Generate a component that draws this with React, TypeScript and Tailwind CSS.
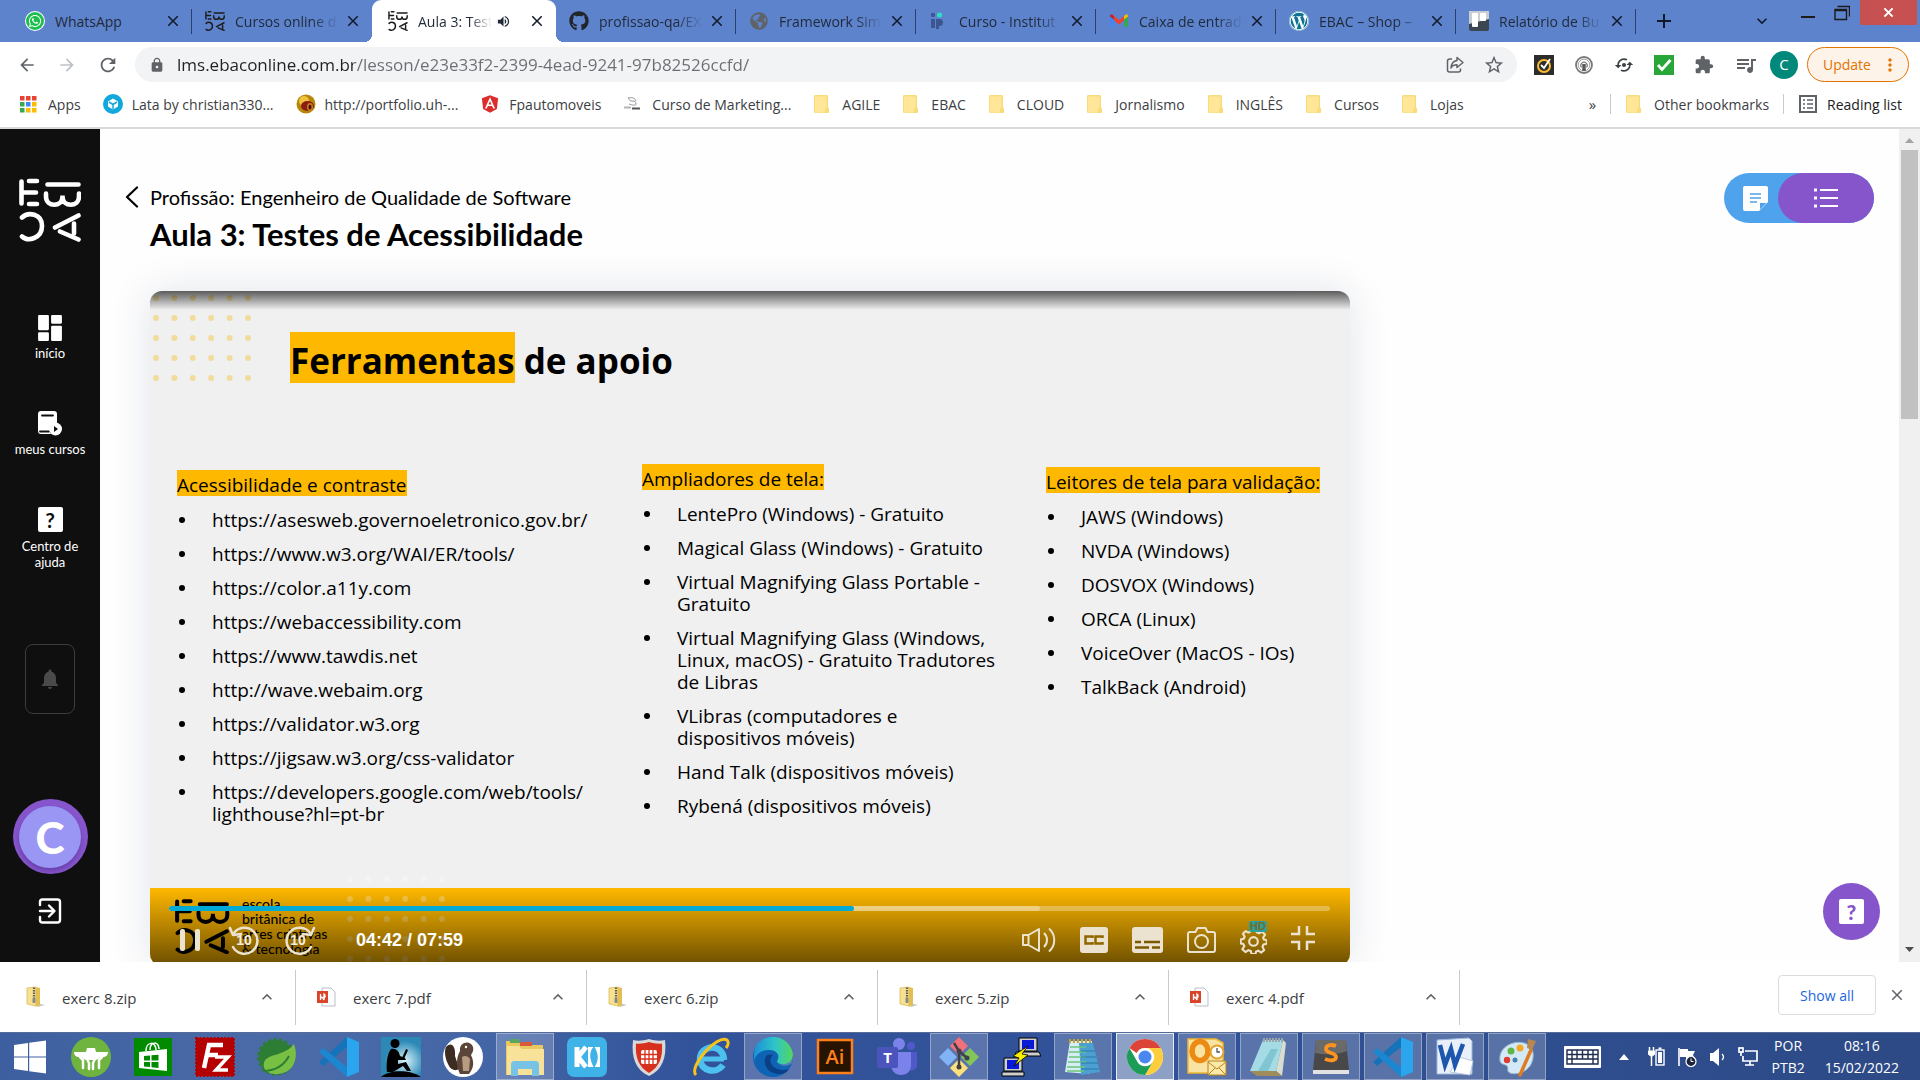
import React from 'react';
import {
  FaWhatsapp, FaGithub, FaWordpress, FaAngular, FaGlobeAmericas,
} from 'react-icons/fa';
import {
  MdArrowBack, MdArrowForward, MdRefresh, MdLock, MdStarBorder, MdVolumeUp, MdQueueMusic, MdExtension,
  MdMoreVert, MdSync, MdClose, MdAdd, MdKeyboardArrowDown, MdKeyboardArrowUp, MdNotifications,
} from 'react-icons/md';

type Kids = { children?: React.ReactNode };

/* ---------- Logos ---------- */

function EbacLogo({ className, color = 'currentColor' }: { className?: string; color?: string }) {
  return (
    <svg viewBox="0 0 62 63" className={className} fill="none" stroke={color} strokeWidth="4.600" strokeLinecap="round">
      <path d="M2.5 3v22M10 2.5h8M3 14h14M10 25.500h8" />
      <path d="M28.500 6h31M27 15v3c0 11 16.500 11 16.500 0v-1v1c0 11 16.500 11 16.500 0v-3" />
      <path d="M3 39c6-6 20-4 20 8.500s-14 16-20 10.500" />
      <path d="M59.500 37L36 49M41 53l18.500 8M55 45v10" />
    </svg>
  );
}

function GmailIcon() {
  return (
    <svg viewBox="0 0 20 20" className="size-5">
      <path d="M1 5v11h4V8z" fill="#4285f4" />
      <path d="M19 5v11h-4V8z" fill="#34a853" />
      <path d="M1 5.500L5 8.500V5L3 3.500C2 3 1 4 1 5.500z" fill="#c5221f" />
      <path d="M19 5.500L15 8.500V5l2-1.500c1-.5 2 .5 2 2z" fill="#fbbc04" />
      <path d="M5 5l5 4 5-4v4.500l-5 4-5-4z" fill="#ea4335" />
    </svg>
  );
}

function InstitutoIcon() {
  return (
    <svg viewBox="0 0 20 20" className="size-5">
      <circle cx="4" cy="4" r="2.200" fill="#3d5590" />
      <path d="M2 8h4v9H2zM7 8h4c4 0 4 7 0 7h-1v3H7z" fill="#3d5590" />
      <circle cx="10.500" cy="4" r="2.500" fill="#2fe0c0" />
    </svg>
  );
}

function TrelloIcon() {
  return (
    <svg viewBox="0 0 20 20" className="size-5">
      <rect width="20" height="20" rx="2" fill="#3c4650" />
      <path d="M0 0h20v8l-20 5z" fill="#c9ced4" />
      <rect x="3" y="2" width="6" height="14" rx="1" fill="#fff" />
      <rect x="11" y="2" width="6" height="8" rx="1" fill="#fff" />
    </svg>
  );
}

/* ---------- Tab strip ---------- */

const tabs: { title: string; icon: React.ReactNode; active?: boolean; line?: boolean; short?: boolean }[] = [
  { title: 'WhatsApp', icon: <span className="flex size-5 items-center justify-center rounded-full bg-white"><span className="flex size-[18px] items-center justify-center rounded-full bg-[#1fbf4f]"><FaWhatsapp className="size-[14px] text-white" /></span></span>, line: true, short: true },
  { title: 'Cursos online d', icon: <EbacLogo className="size-5" color="#1c1c1c" /> },
  { title: 'Aula 3: Teste', icon: <EbacLogo className="size-5" color="#1c1c1c" />, active: true },
  { title: 'profissao-qa/EX', icon: <FaGithub className="size-5 text-[#22262b]" />, line: true },
  { title: 'Framework Sim', icon: <FaGlobeAmericas className="size-[18px] text-[#5f6368]" />, line: true },
  { title: 'Curso - Institut', icon: <InstitutoIcon />, line: true },
  { title: 'Caixa de entrad', icon: <GmailIcon />, line: true },
  { title: 'EBAC – Shop –', icon: <FaWordpress className="size-5 rounded-full bg-white text-[#0e7294]" />, line: true },
  { title: 'Relatório de Bu', icon: <TrelloIcon />, line: true },
];

function TabStrip() {
  return (
    <div className="flex h-[42px] shrink-0 bg-[#5e83cd] pl-3 text-[14px] text-[#1f2937]">
      <div className="flex" role="tablist">
        {tabs.map((t) => (
          <div
            key={t.title}
            className={
              t.active
                ? 'relative flex w-[184px] items-center rounded-t-[9px] bg-white pl-4'
                : 'relative flex w-[180px] items-center pl-[13px]'
            }
          >
            {t.active && (
              <>
                <span className="absolute bottom-0 -left-2 size-2 bg-[radial-gradient(circle_at_0_0,transparent_8px,#fff_8px)]" />
                <span className="absolute -right-2 bottom-0 size-2 bg-[radial-gradient(circle_at_100%_0,transparent_8px,#fff_8px)]" />
              </>
            )}
            <span className="flex w-5 shrink-0 justify-center">{t.icon}</span>
            <button
              role="tab"
              aria-selected={!!t.active}
              className={
                t.active
                  ? 'ml-[10px] w-[74px] overflow-hidden text-left whitespace-nowrap [mask-image:linear-gradient(to_right,#000_70%,transparent)]'
                  : t.short
                    ? 'ml-[10px] w-[104px] text-left'
                    : 'ml-[10px] w-[104px] overflow-hidden text-left whitespace-nowrap [mask-image:linear-gradient(to_right,#000_74%,transparent)]'
              }
            >
              {t.title}
            </button>
            {t.active && <MdVolumeUp className="mr-3 ml-1 size-[15px] shrink-0" />}
            <button aria-label={`Fechar ${t.title}`} className="ml-1 flex size-5 items-center justify-center">
              <MdClose className="size-[18px] text-[#111827]" />
            </button>
            {t.line && <span className="absolute top-[9px] right-0 h-[25px] w-px bg-[#2c3f66]" />}
          </div>
        ))}
      </div>
      <button aria-label="Nova guia" className="ml-[10px] flex w-9 items-center justify-center">
        <MdAdd className="size-6 text-[#111827]" />
      </button>
      <div className="ml-auto flex items-start">
        <button aria-label="Pesquisar guias" className="flex h-[42px] w-8 items-center justify-center">
          <MdKeyboardArrowDown className="size-5 text-[#111827]" />
        </button>
        <button aria-label="Minimizar" className="ml-[14px] flex h-[25px] w-8 items-center justify-center">
          <svg viewBox="0 0 16 16" className="size-4"><path d="M1 12h14" stroke="#1b1b1b" strokeWidth="2" /></svg>
        </button>
        <button aria-label="Restaurar" className="flex h-[25px] w-9 items-center justify-center">
          <svg viewBox="0 0 16 16" className="size-4" fill="none" stroke="#1b1b1b"><path d="M1 4.500h11.500v10H1zM1 5.500h11M3.500 1.500h12v10" strokeWidth="1.400" /></svg>
        </button>
        <button aria-label="Fechar" className="mr-[3px] flex h-[25px] w-[57px] items-center justify-center bg-[#c75050]">
          <svg viewBox="0 0 12 12" className="size-[11px]"><path d="M1.500 1.500l9 9M10.500 1.500l-9 9" stroke="#fff" strokeWidth="2.200" /></svg>
        </button>
      </div>
    </div>
  );
}

/* ---------- Toolbar ---------- */

function Toolbar() {
  return (
    <div className="flex h-[45px] shrink-0 items-center bg-white pr-[11px] pl-[17px] text-[#5f6368]">
      <div className="flex gap-5">
        <button aria-label="Voltar"><MdArrowBack className="size-5" /></button>
        <button aria-label="Avançar"><MdArrowForward className="size-5 text-[#bdc1c6]" /></button>
        <button aria-label="Recarregar"><MdRefresh className="size-[22px]" /></button>
      </div>
      <div className="ml-4 flex h-[35px] flex-1 items-center rounded-full bg-[#f1f3f4] pr-3 pl-[14px]">
        <MdLock className="size-4" />
        <input
          aria-label="Endereço"
          readOnly
          value="lms.ebaconline.com.br/lesson/e23e33f2-2399-4ead-9241-97b82526ccfd/"
          className="ml-3 h-full flex-1 bg-[linear-gradient(90deg,#202124_176px,#6a6e73_176px)] bg-clip-text text-[17px] text-transparent outline-none"
        />
        <button aria-label="Compartilhar">
          <svg viewBox="0 0 20 20" className="size-5" fill="none" stroke="#5f6368" strokeWidth="1.500" strokeLinejoin="round">
            <path d="M7 4H5C3.500 4 2.500 5 2.500 6v9c0 1.200 1 2 2 2h9c1.200 0 2-.8 2-2v-1.500" />
            <path d="M12 2.500l6 5-6 5V9.800c-3 0-5 1-6 3.200.3-4.500 2.500-7 6-7.500z" />
          </svg>
        </button>
        <button aria-label="Favoritar" className="ml-[18px]"><MdStarBorder className="size-[22px]" /></button>
      </div>
      <div className="ml-[17px] flex items-center gap-5">
        <button aria-label="Norton">
          <svg viewBox="0 0 20 20" className="size-5">
            <rect width="20" height="20" fill="#2d2d2d" />
            <circle cx="10" cy="11" r="6" fill="none" stroke="#fdbb30" strokeWidth="2" />
            <path d="M7 10l3 3 6-9" fill="none" stroke="#fff" strokeWidth="1.800" />
          </svg>
        </button>
        <button aria-label="Extensão de privacidade">
          <svg viewBox="0 0 20 20" className="size-5" fill="none" stroke="#7a7a7a">
            <circle cx="10" cy="10" r="8" strokeWidth="1.800" />
            <circle cx="10" cy="10" r="5.800" stroke="#a5a5a5" />
            <path d="M7.500 12.500a3.200 3.200 0 1 1 5 0" strokeWidth="1.200" />
            <path d="M10 9v7" stroke="#5a5a5a" strokeWidth="3.500" />
          </svg>
        </button>
        <button aria-label="Sincronizar" className="relative flex">
          <MdSync className="size-5 rotate-90 text-[#3c4043]" />
          <span className="absolute top-2 left-2 size-1 rounded-full bg-[#3c4043]" />
        </button>
        <button aria-label="Verificado">
          <svg viewBox="0 0 20 20" className="size-5"><rect width="20" height="20" fill="#29a63a" /><path d="M4 10l4 4.500L16.500 5" fill="none" stroke="#fff" strokeWidth="2.800" /></svg>
        </button>
        <button aria-label="Extensões"><MdExtension className="size-5" /></button>
        <button aria-label="Controle de mídia"><MdQueueMusic className="size-6" /></button>
      </div>
      <button aria-label="Perfil" className="ml-3 flex size-7 items-center justify-center rounded-full bg-[#00897b] text-[15px] text-white">C</button>
      <button className="ml-[9px] flex h-[35px] w-[102px] items-center justify-between rounded-full border border-[#e37400] bg-[#fdf3e9] pr-2 pl-[15px] text-[14px] text-[#e37400]">
        Update
        <MdMoreVert className="size-5" />
      </button>
    </div>
  );
}

/* ---------- Bookmarks ---------- */

function Folder() {
  return (
    <svg viewBox="0 0 20 20" className="size-5">
      <path d="M1 2.500c0-1 .5-1.500 1.500-1.500h11c1 0 1.500.5 1.500 1.500V13l1 1.500V18c0 .6-.4 1-1 1H2.500C1.500 19 1 18.500 1 17.500z" fill="#f9dc7a" />
      <path d="M2 2.500h11.500V13l-1.500 2v3.500H2z" fill="#ffe699" />
    </svg>
  );
}

function AppsGrid() {
  const colors = ['#ea4335', '#ea4335', '#ea4335', '#34a853', '#4285f4', '#fbbc04', '#34a853', '#fbbc04', '#fbbc04'];
  return (
    <svg viewBox="0 0 19 20" className="h-5 w-[19px]">
      {colors.map((c, i) => <rect key={i} x={(i % 3) * 6} y={2 + Math.floor(i / 3) * 6} width="4.500" height="4.500" fill={c} />)}
    </svg>
  );
}

const bookmarks: { label: string; icon: React.ReactNode }[] = [
  { label: 'Apps', icon: <AppsGrid /> },
  {
    label: 'Lata by christian330...',
    icon: <svg viewBox="0 0 20 20" className="size-5"><circle cx="10" cy="10" r="10" fill="#12a8dc" /><path d="M10 4.500l5 3v5l-5 3-5-3v-5z" fill="#fff" /><path d="M6 8l4 2.500L14 8M10 10.500V15" stroke="#12a8dc" strokeWidth="1.500" fill="none" /></svg>,
  },
  {
    label: 'http://portfolio.uh-...',
    icon: <svg viewBox="0 0 20 20" className="size-5"><circle cx="10" cy="10" r="9.500" fill="#b8860b" /><circle cx="8" cy="7" r="5" fill="#f0c33c" /><ellipse cx="11.500" cy="12" rx="6.500" ry="5" fill="#8e1c12" /><ellipse cx="14" cy="13" rx="3" ry="4" fill="#c9831c" /><ellipse cx="14" cy="13" rx="1.500" ry="2.500" fill="#4c0f08" /></svg>,
  },
  { label: 'Fpautomoveis', icon: <FaAngular className="size-5 text-[#dd2c2c]" /> },
  {
    label: 'Curso de Marketing...',
    icon: <svg viewBox="0 0 20 20" className="size-5" fill="none" stroke="#888"><path d="M5 3c1 2 1 4 4 4s4 1 4 3-4 1-7 0M6 4c3-1 6 0 7 3" strokeWidth=".9" /><path d="M1 13.500h7" stroke="#b5b5b5" strokeWidth="2" /><path d="M9 14.500h8" stroke="#555" strokeWidth="2" /></svg>,
  },
  ...['AGILE', 'EBAC', 'CLOUD', 'Jornalismo', 'INGLÊS', 'Cursos', 'Lojas'].map((label) => ({ label, icon: <Folder /> })),
];

function Bookmark({ icon, children }: Kids & { icon: React.ReactNode }) {
  return (
    <a href="#" className="flex items-center gap-[9px] whitespace-nowrap">
      {icon}
      {children}
    </a>
  );
}

function BookmarksBar() {
  return (
    <nav aria-label="Favoritos" className="flex h-[42px] shrink-0 items-center border-b-2 border-[#d9dadc] bg-white pr-[18px] pb-[6px] pl-5 text-[14px] text-[#3c4043]">
      <div className="flex gap-[22px]">
        {bookmarks.map((b) => <Bookmark key={b.label} icon={b.icon}>{b.label}</Bookmark>)}
      </div>
      <div className="ml-auto flex items-center">
        <button aria-label="Mais favoritos" className="text-[15px]">»</button>
        <span className="mx-[14px] h-5 w-px bg-[#c8cacd]" />
        <Bookmark icon={<Folder />}>Other bookmarks</Bookmark>
        <span className="mx-[14px] h-5 w-px bg-[#c8cacd]" />
        <Bookmark icon={<svg viewBox="0 0 20 20" className="size-5" fill="none" stroke="#5f6368"><rect x="2" y="2" width="16" height="16" strokeWidth="2" /><path d="M5 6h2M9 6h6M5 10h2M9 10h6M5 14h2M9 14h6" strokeWidth="1.600" /></svg>}>
          <span className="text-[#202124]">Reading list</span>
        </Bookmark>
      </div>
    </nav>
  );
}

/* ---------- LMS sidebar ---------- */

function Sidebar() {
  return (
    <aside className="flex w-[100px] shrink-0 flex-col items-center bg-[#0f0f0f] pt-[49px] font-['Lato',sans-serif] text-[13px] leading-4 text-white">
      <a href="#" aria-label="EBAC"><EbacLogo className="h-[64px] w-[62px]" /></a>
      <a href="#" className="mt-[73px] flex flex-col items-center">
        <svg viewBox="0 0 24 24" className="size-[26px]" fill="#fff">
          <rect x="1" y="0" width="10" height="14" rx="1" /><rect x="1" y="16" width="10" height="8" rx="1" />
          <rect x="13" y="0" width="10" height="8" rx="1" /><rect x="13" y="10" width="10" height="14" rx="1" />
        </svg>
        <span className="mt-1">início</span>
      </a>
      <a href="#" className="mt-[49px] flex flex-col items-center">
        <svg viewBox="0 0 26 26" className="size-[26px]">
          <path d="M4 1h13c2 0 3 1 3 3v9a7 7 0 0 0-6 11H4c-2 0-3-1-3-3V4c0-2 1-3 3-3z" fill="#fff" />
          <path d="M5 5.500h11M3 21.500h9" stroke="#0f0f0f" strokeWidth="1.800" strokeLinecap="round" />
          <circle cx="18.500" cy="19" r="6.500" fill="#fff" /><path d="M17 16v6l4-3z" fill="#0f0f0f" />
        </svg>
        <span className="mt-[5px]">meus cursos</span>
      </a>
      <a href="#" className="mt-[50px] flex flex-col items-center">
        <span className="flex size-[25px] items-center justify-center rounded-xs bg-white text-[21px] font-bold text-[#0f0f0f]">?</span>
        <span className="mt-[6px] w-[70px] text-center">Centro de ajuda</span>
      </a>
      <button aria-label="Notificações" className="mt-[74px] flex h-[70px] w-[50px] items-center justify-center rounded-lg border border-[#3c3c3c]">
        <MdNotifications className="size-6 text-[#4a4a4a]" />
      </button>
      <button aria-label="Conta" className="mt-[85px] flex size-[75px] items-center justify-center rounded-full bg-[#8655cc]">
        <span className="flex size-[62px] items-center justify-center rounded-full bg-[#9996f4] text-[44px] font-black shadow-[0_3px_4px_rgba(60,30,120,0.4)]">C</span>
      </button>
      <button aria-label="Sair" className="mt-[24px]">
        <svg viewBox="0 0 24 26" className="h-[26px] w-6" fill="none" stroke="#fff" strokeWidth="2.400" strokeLinecap="round" strokeLinejoin="round">
          <path d="M2 7V4c0-1.500 1-2.500 2.500-2.500h15C21 1.500 22 2.500 22 4v18c0 1.500-1 2.500-2.500 2.500h-15C3 24.500 2 23.500 2 22v-3" />
          <path d="M2 13h14M11 7.500l5.500 5.500-5.500 5.500" />
        </svg>
      </button>
    </aside>
  );
}

/* ---------- Lesson slide ---------- */

const columns: { title: string; offset: string; items: string[] }[] = [
  {
    title: 'Acessibilidade e contraste',
    offset: 'mt-[6px]',
    items: [
      'https://asesweb.governoeletronico.gov.br/',
      'https://www.w3.org/WAI/ER/tools/',
      'https://color.a11y.com',
      'https://webaccessibility.com',
      'https://www.tawdis.net',
      'http://wave.webaim.org',
      'https://validator.w3.org',
      'https://jigsaw.w3.org/css-validator',
      'https://developers.google.com/web/tools/\nlighthouse?hl=pt-br',
    ],
  },
  {
    title: 'Ampliadores de tela:',
    offset: 'mt-0',
    items: [
      'LentePro (Windows) - Gratuito',
      'Magical Glass (Windows) - Gratuito',
      'Virtual Magnifying Glass Portable -\nGratuito',
      'Virtual Magnifying Glass (Windows,\nLinux, macOS) - Gratuito Tradutores\nde Libras',
      'VLibras (computadores e\ndispositivos móveis)',
      'Hand Talk (dispositivos móveis)',
      'Rybená (dispositivos móveis)',
    ],
  },
  {
    title: 'Leitores de tela para validação:',
    offset: 'mt-[3px]',
    items: ['JAWS (Windows)', 'NVDA (Windows)', 'DOSVOX (Windows)', 'ORCA (Linux)', 'VoiceOver (MacOS - IOs)', 'TalkBack (Android)'],
  },
];

function Dots({ rows, color, className }: { rows: number; color: string; className: string }) {
  return (
    <svg viewBox={`0 0 98 ${rows * 20}`} width="98" height={rows * 20} className={className} fill={color}>
      {Array.from({ length: rows * 6 }, (_, i) => (
        <circle key={i} cx={3 + (i % 6) * 18.400} cy={7 + Math.floor(i / 6) * 20} r="3" />
      ))}
    </svg>
  );
}

function Rewind({ flip }: { flip?: boolean }) {
  return (
    <svg viewBox="0 0 32 32" className={flip ? 'size-8 -scale-x-100' : 'size-8'} fill="none" stroke="#ebe3cf" strokeWidth="2.500" strokeLinecap="round" strokeLinejoin="round">
      <path d="M6 9a13 13 0 1 1-1 14" />
      <path d="M2 4l3 7 8-1" />
    </svg>
  );
}

function PlayerControls() {
  return (
    <div className="absolute inset-x-0 bottom-0 h-[78px] bg-linear-to-b from-transparent to-black/58 pt-[18px]">
      <div className="relative mr-5 ml-[19px] h-[5px] rounded-full bg-white/30">
        <div className="absolute inset-y-0 left-0 w-3/4 rounded-full bg-white/30" />
        <div className="absolute inset-y-0 left-0 w-[59%] rounded-full bg-[#00aad4]" />
        <input type="range" aria-label="Progresso" min={0} max={479} defaultValue={282} className="absolute inset-0 h-full w-full opacity-0" />
      </div>
      <div className="flex h-[58px] items-center pr-[35px] pl-[30px]">
        <button aria-label="Pausar">
          <svg viewBox="0 0 22 24" className="h-6 w-[22px]" fill="#ebe3cf"><rect x="0" y="1" width="5" height="22" rx="2" /><rect x="15" y="1" width="5" height="22" rx="2" /></svg>
        </button>
        <button aria-label="Voltar 10 segundos" className="relative ml-[26px] flex size-8 items-center justify-center">
          <span className="absolute inset-0"><Rewind /></span>
          <span className="font-['Liberation_Sans',sans-serif] text-[14px] font-bold text-[#f3eee0]">10</span>
        </button>
        <button aria-label="Avançar 10 segundos" className="relative ml-6 flex size-8 items-center justify-center">
          <span className="absolute inset-0"><Rewind flip /></span>
          <span className="pr-1 font-['Liberation_Sans',sans-serif] text-[14px] font-bold text-[#f3eee0]">10</span>
        </button>
        <span className="ml-10 pt-px font-['Liberation_Sans',sans-serif] text-[18px] font-bold text-white">04:42 / 07:59</span>
        <div className="ml-auto flex items-center gap-6">
          <button aria-label="Volume">
            <svg viewBox="0 0 34 26" className="h-[26px] w-[34px]" fill="none" stroke="#ebe3cf" strokeWidth="2" strokeLinejoin="round">
              <path d="M1 8h5.500L17 2v22L6.500 18H1zM6.500 8v10M22 6c4 4 4 10 0 14M27 1.500c7 6 7 17 0 23" />
            </svg>
          </button>
          <button aria-label="Legendas ocultas">
            <svg viewBox="0 0 28 26" className="h-[26px] w-7">
              <rect width="28" height="26" rx="3" fill="#ebe3cf" />
              <path d="M12.500 11V9.500H5.500v7h7V15M22.500 11V9.500h-7v7h7V15" fill="none" stroke="#8f6600" strokeWidth="2.500" />
            </svg>
          </button>
          <button aria-label="Legendas">
            <svg viewBox="0 0 31 26" className="h-[26px] w-[31px]">
              <rect width="31" height="26" rx="3" fill="#ebe3cf" />
              <path d="M3 15h6M12 15h16M3 20.500h14M20 20.500h8" stroke="#7d5900" strokeWidth="2.500" />
            </svg>
          </button>
          <button aria-label="Captura">
            <svg viewBox="0 0 29 26" className="h-[26px] w-[29px]" fill="none" stroke="#ebe3cf" strokeWidth="2" strokeLinejoin="round">
              <path d="M3 5h5.500l2-4h8l2 4H26c1.200 0 2 .8 2 2v16c0 1.200-.8 2-2 2H3c-1.200 0-2-.8-2-2V7c0-1.200.8-2 2-2z" />
              <circle cx="14.500" cy="14.500" r="6.500" />
            </svg>
          </button>
          <button aria-label="Configurações" className="relative">
            <svg viewBox="0 0 28 28" className="size-[27px]" fill="none" stroke="#ebe3cf" strokeWidth="2.200" strokeLinejoin="round">
              <path d="M11.500 2h5l.8 3.500 2.500 1L23 4.800 26 8l-2 3 .8 2 3 .8v3.500l-3.500.8-1 2.300L25 24l-3 2.500-3-2-2.300 1-.7 2.500h-4l-.8-3-2.500-1-3 2L2.500 23l2-3-1-2.300L.8 17v-4l3-.8 1-2.300L3 7l3-2.800 2.700 1.600 2-.8z" />
              <circle cx="14" cy="15" r="4.500" />
            </svg>
            <span className="absolute -top-[6px] right-0 flex h-[11px] items-center rounded-xs bg-[#2aa19a] px-px font-['Liberation_Sans',sans-serif] text-[11px] leading-none font-bold text-[#7a6a2a]">HD</span>
          </button>
          <button aria-label="Sair da tela cheia">
            <svg viewBox="0 0 24 26" className="mb-1 h-[26px] w-6" fill="none" stroke="#ebe3cf" strokeWidth="2.500">
              <path d="M8 1v8H0M16 1v8h8M8 25v-8H0M16 25v-8h8" />
            </svg>
          </button>
        </div>
      </div>
    </div>
  );
}

function LessonVideo() {
  return (
    <section className="relative flex aspect-video max-w-[1200px] flex-col overflow-hidden rounded-xl bg-[#f0f0f1] font-['Open_Sans',sans-serif] text-black">
      <Dots rows={5} color="#f2dc9b" className="absolute top-0 left-[3px]" />
      <div className="absolute inset-x-0 top-0 h-[19px] bg-linear-to-b from-black/62 to-transparent" />
      <h2 className="mt-[41px] ml-[140px] h-[51px] text-[35px] leading-[57px] font-bold">
        <span className="inline-block h-[51px] bg-[#ffb800]">Ferramentas</span> de apoio
      </h2>
      <div className="mt-[81px] ml-[27px] grid grid-cols-[465px_404px_1fr] items-start text-[19px]">
        {columns.map((c) => (
          <div key={c.title} className={c.offset}>
            <h3 className="inline-block h-[26px] bg-[#ffb800] leading-[31px] whitespace-nowrap">{c.title}</h3>
            <ul className="mt-[9px] flex flex-col gap-3 leading-[22px]">
              {c.items.map((item) => (
                <li key={item} className="flex whitespace-pre">
                  <span className="mt-2 mr-[27px] ml-[2px] size-[6px] shrink-0 rounded-full bg-black" />
                  {item}
                </li>
              ))}
            </ul>
          </div>
        ))}
      </div>
      <div className="mt-auto flex h-[78px] shrink-0 bg-[#ffb800] pt-2 pl-6 text-black">
        <EbacLogo className="mt-[3px] h-[55px] w-[56px]" />
        <p className="ml-3 font-['Lato',sans-serif] text-[14px] leading-[15px] font-medium">
          escola<br />britânica de<br />artes criativas<br />&amp; tecnologia
        </p>
      </div>
      <Dots rows={5} color="rgba(255,255,255,0.28)" className="absolute -bottom-[6px] left-[197px]" />
      <PlayerControls />
    </section>
  );
}

function LessonPage() {
  return (
    <main className="relative min-w-0 flex-1 overflow-hidden bg-[#fefefe] pr-[25px] pl-[25px] font-['Lato',sans-serif] text-black">
      <header className="flex items-start pt-[44px]">
        <a href="#" aria-label="Voltar ao curso" className="mt-[13px] w-[25px]">
          <svg viewBox="0 0 14 22" className="h-[22px] w-[14px]" fill="none" stroke="#000" strokeWidth="2.200" strokeLinecap="round" strokeLinejoin="round"><path d="M12 1.500L2 11l10 9.500" /></svg>
        </a>
        <div className="pt-3">
          <p className="text-[20px] leading-6">Profissão: Engenheiro de Qualidade de Software</p>
          <h1 className="mt-[7px] text-[31px] leading-[36px] font-bold">Aula 3: Testes de Acessibilidade</h1>
        </div>
        <div className="ml-auto flex rounded-full bg-[#4fa3ec]">
          <button aria-label="Anotações" className="flex h-[50px] w-[54px] items-center justify-center pl-2">
            <svg viewBox="0 0 25 25" className="size-[25px]">
              <path d="M2 0h21c1.200 0 2 .8 2 2v14l-9 9H2c-1.200 0-2-.8-2-2V2C0 .8.800 0 2 0z" fill="#fff" />
              <path d="M17 23.500V17h6.500z" fill="#4fa3ec" />
              <path d="M7 8h11M7 12h11M7 16h7" stroke="#4fa3ec" strokeWidth="1.600" />
            </svg>
          </button>
          <button aria-label="Conteúdo" className="flex h-[50px] w-24 items-center justify-center rounded-full bg-[#8655cc]">
            <svg viewBox="0 0 24 20" className="h-5 w-6" stroke="#fff" strokeWidth="1.800">
              <path d="M6 2h18M6 10h18M6 18h18" /><path d="M0 2h3M0 10h3M0 18h3" strokeWidth="3" />
            </svg>
          </button>
        </div>
      </header>
      <div className="mt-[39px] ml-[25px] max-w-[1200px] rounded-xl shadow-[0_0_40px_rgba(20,40,90,0.12)]">
        <LessonVideo />
      </div>
      <button aria-label="Ajuda" className="absolute right-[19px] bottom-[22px] flex size-[57px] items-center justify-center rounded-full bg-[#8655cc]">
        <span className="flex size-[25px] items-center justify-center rounded-xs bg-white text-[21px] leading-none font-black text-[#8655cc]">?</span>
      </button>
    </main>
  );
}

function Scrollbar() {
  return (
    <div className="flex w-[21px] shrink-0 flex-col items-center bg-[#f0f0f0]" aria-hidden="true">
      <svg viewBox="0 0 9 5" className="mt-[9px] h-[5px] w-[9px]"><path d="M0 5l4.500-5L9 5z" fill="#a3a3a3" /></svg>
      <span className="mt-[7px] h-[269px] w-[17px] bg-[#c1c1c1]" />
      <svg viewBox="0 0 9 5" className="mt-auto mb-[10px] h-[5px] w-[9px]"><path d="M0 0l4.500 5L9 0z" fill="#505050" /></svg>
    </div>
  );
}

/* ---------- Downloads ---------- */

function ZipIcon() {
  return (
    <svg viewBox="0 0 20 22" className="h-[22px] w-5">
      <path d="M11 17l8 2-7 2z" fill="#c9c9c9" />
      <path d="M1 2l9-1v19l-9-2z" fill="#f7e08f" stroke="#d5b64c" strokeWidth=".7" />
      <path d="M10 1l4 1v17l-4 2z" fill="#e3bf53" />
      <path d="M8 1.500v12" stroke="#5a5a5a" strokeWidth="2.200" strokeDasharray="1.500 1" />
      <rect x="6.500" y="12" width="3" height="5" rx="1" fill="#8a8a8a" />
    </svg>
  );
}

function PdfIcon() {
  return (
    <svg viewBox="0 0 20 22" className="h-[22px] w-5">
      <path d="M5 2h9l4 4v14H5z" fill="#fdfdfd" stroke="#b9c0c7" />
      <rect x="0" y="5" width="11" height="12" fill="#d9432a" />
      <path d="M3.500 14V8M3.500 11c2 0 3 1 3.500 3V8c1.500 1 1.500 3 0 4" stroke="#fff" strokeWidth="1.300" fill="none" />
    </svg>
  );
}

function Downloads() {
  const files = ['exerc 8.zip', 'exerc 7.pdf', 'exerc 6.zip', 'exerc 5.zip', 'exerc 4.pdf'];
  return (
    <div className="flex h-[70px] shrink-0 items-center bg-white pr-[14px] pl-[5px] text-[15px] text-[#3c4043]">
      {files.map((f) => (
        <div key={f} className="flex h-[55px] w-[291px] items-center border-r border-[#c8cacd] pr-[18px] pl-[21px]">
          {f.endsWith('zip') ? <ZipIcon /> : <PdfIcon />}
          <button className="mt-[2px] ml-4">{f}</button>
          <button aria-label={`Opções de ${f}`} className="ml-auto"><MdKeyboardArrowUp className="size-5 text-[#5f6368]" /></button>
        </div>
      ))}
      <button className="mr-3 mb-1 ml-auto h-10 w-[98px] rounded border border-[#dadce0] text-[14px] text-[#1a66e0]">Show all</button>
      <button aria-label="Fechar downloads" className="mb-1"><MdClose className="size-[18px] text-[#5f6368]" /></button>
    </div>
  );
}

/* ---------- Taskbar ---------- */

function Tile({ children }: Kids) {
  return <svg viewBox="0 0 40 40" className="size-10">{children}</svg>;
}

function VsCode() {
  return (
    <Tile>
      <path d="M28 10L4 29l-4-4L28 0z" fill="#1673b9" />
      <path d="M28 30L4 11l-4 4 28 25z" fill="#1c86d1" />
      <path d="M28 0l12 5v30l-12 5z" fill="#2aa5ee" />
    </Tile>
  );
}

type TaskItem = { name: string; open?: boolean; current?: boolean; icon: React.ReactNode };

const tasks: TaskItem[] = [
  { name: 'Tripod', icon: <Tile><circle cx="20" cy="20" r="20" fill="#6eb43f" /><path d="M3 15h12l1-4h8l1 4h12c0 3-2 5-5 5h-3c-1 2-3 3-5 3h-8c-2 0-4-1-5-3H8c-3 0-5-2-5-5z" fill="#fff" /><path d="M9 20l3 3v8M31 20l-3 3v8M16 22l2 4v6M24 22l-2 4v6" stroke="#fff" strokeWidth="2.500" strokeLinecap="round" fill="none" /></Tile> },
  { name: 'Store', icon: <Tile><rect x="1" y="1" width="38" height="38" fill="#008a00" /><path d="M6 15l28-3v22L6 31z" fill="#fff" /><path d="M13 14c0-10 10-10 10-1M17 13c0-9 9-9 9-1" fill="none" stroke="#fff" strokeWidth="1.500" /><path d="M11 19l6-.5v5h-6zM18.500 18.300l7-.6v5.800h-7zM11 25h6v5l-6-.6zM18.500 25h7v6l-7-.7z" fill="#008a00" /></Tile> },
  { name: 'FileZilla', icon: <Tile><rect x="1" y="1" width="38" height="38" fill="#b40000" stroke="#b40000" strokeWidth="2" strokeDasharray="2 1.500" /><path d="M9 31L14 8h14M12 18h11" fill="none" stroke="#fff" strokeWidth="4.500" /><path d="M20 20h13L21 33h12" fill="none" stroke="#fff" strokeWidth="3.500" /></Tile> },
  { name: 'Spring', icon: <Tile><circle cx="19" cy="20" r="17" fill="#2d7d34" stroke="#2d7d34" strokeWidth="4" strokeDasharray="3 2.500" /><path d="M37 7c5 14 0 29-16 30-9 1-16-4-14-11C9 16 27 20 37 7z" fill="#78c043" /><path d="M6 34c10 0 20-4 26-15" fill="none" stroke="#2d7d34" strokeWidth="2" /></Tile> },
  { name: 'VS Code', icon: <VsCode /> },
  { name: 'Kindle', icon: <Tile><defs><radialGradient id="kindle" cx=".6" cy=".6"><stop offset="0" stopColor="#d9f4fb" /><stop offset="1" stopColor="#2c89b6" /></radialGradient></defs><rect width="40" height="40" fill="url(#kindle)" /><path d="M0 40c8-7 28-8 40 0z" fill="#000" /><circle cx="14" cy="6.500" r="4.500" fill="#000" /><path d="M10 12c5-1 8 2 9 7l5 2 1 2-8 0 0 4 8-2 5 9h-4l-4-5-10 6H6C5 27 6 17 10 12z" fill="#000" /><path d="M27 13l-4 9-2-1 4-9z" fill="#000" /></Tile> },
  { name: 'DBeaver', icon: <Tile><circle cx="20" cy="20" r="20" fill="#fff" /><path d="M3 10c5-6 10-1 9 9l4 12c-2 4-8 2-10-2C2 22 1 14 3 10z" fill="#3d2c22" /><path d="M17 14c-1-10 11-11 13-4 1 4-1 6-2 8 4 8 2 14-2 19h-9c-4-8-4-16 0-23z" fill="#5b4538" /><path d="M19 20c3-2 6-1 8 2l-1 12h-6z" fill="#b89c82" /><circle cx="23" cy="10" r="1.200" fill="#fff" /></Tile> },
  { name: 'Explorer', open: true, icon: <Tile><path d="M1 4h12l3 4h22v30H1z" fill="#e9c860" /><path d="M5 2h9v4H5z" fill="#58a858" /><path d="M15 5h12v4H15z" fill="#d75b3b" /><path d="M2 9h12l3 3h22v26H2z" fill="#f8e29a" /><path d="M6 39V28c0-3 1-4 4-4h20c3 0 4 1 4 4v11h-7v-7H13v7z" fill="#77c3e6" /></Tile> },
  { name: 'KI', icon: <Tile><rect width="40" height="40" rx="7" fill="#3fb3e8" /><path d="M10 10v20M19 10l-8 10 8 10" fill="none" stroke="#fff" strokeWidth="5" /><path d="M21 10h12v20H21z" fill="#fff" /><path d="M27 9c-6 7-4 14 0 22 5-7 5-14 0-22z" fill="#3fb3e8" /></Tile> },
  { name: 'Segurança', icon: <Tile><path d="M20 2c6 2 12 2 16 1 2 18-3 30-16 36C7 33 2 21 4 3c4 1 10 1 16-1z" fill="#d9d9d9" /><path d="M20 5c5 1.500 9 2 13 1.500C34 21 30 30 20 36 10 30 6 21 7 6.500 11 7 15 6.500 20 5z" fill="#d7301c" /><rect x="12" y="13" width="16" height="14" rx="2" fill="#fff" /><path d="M16 13v14M20 13v14M24 13v14M12 17.500h16M12 22h16" stroke="#d7301c" strokeWidth="1.300" /></Tile> },
  { name: 'Internet Explorer', icon: <Tile><path d="M10 22h23" stroke="#4cc1ef" strokeWidth="5" /><path d="M32 28c-6 9-22 7-23-6C9 8 32 5 33 23" fill="none" stroke="#4cc1ef" strokeWidth="6.500" /><path d="M5 38C-3 30 26-3 36 3c3 3-1 8-1 8" fill="none" stroke="#f8c21c" strokeWidth="3" /></Tile> },
  { name: 'Edge', open: true, icon: <Tile><defs><linearGradient id="edge" x1="0" x2="1"><stop offset="0" stopColor="#1c8fd6" /><stop offset=".55" stopColor="#2fc6c8" /><stop offset="1" stopColor="#55d65c" /></linearGradient></defs><circle cx="20" cy="20" r="20" fill="#0f63b5" /><path d="M26 27c4 3 10 2 13-1a20 20 0 0 0 1-6c-2 6-8 8-14 7z" fill="#5f7db8" /><path d="M1 15C4-5 36-6 40 17c0 8-6 11-12 10-5-1-4-3-3-5 2-5-3-9-8-9C8 12 2 18 1 25z" fill="url(#edge)" /><path d="M13 19c-4 9 3 18 13 18 5 0 8-2 10-5-5 2-14 1-17-4-3-4-1-8 1-10-3-1-6 0-7 1z" fill="#0b3f86" /></Tile> },
  { name: 'Illustrator', icon: <Tile><rect x="3" y="3" width="34" height="33" fill="#261300" stroke="#ff7f18" strokeWidth="2.500" /><text x="20" y="27" textAnchor="middle" fontFamily="Open Sans" fontWeight="600" fontSize="20" fill="#ff7f18">Ai</text></Tile> },
  { name: 'Teams', icon: <Tile><circle cx="22" cy="7" r="6" fill="#7b83eb" /><circle cx="34" cy="9" r="4" fill="#5059c9" /><path d="M28 15h12v13c0 4-5 7-9 5z" fill="#5059c9" /><path d="M14 15h20v13c0 6-4 10-10 10s-10-5-10-10z" fill="#7b83eb" /><rect x="0" y="10" width="21" height="21" rx="2" fill="#4b53bc" /><text x="10.500" y="26" textAnchor="middle" fontFamily="Open Sans" fontWeight="700" fontSize="15" fill="#fff">T</text></Tile> },
  { name: 'Git', open: true, icon: <Tile><path d="M20 0l9 9-9 9-9-9z" fill="#f2707a" /><path d="M31 11l9 9-9 9-9-9z" fill="#84c55a" /><path d="M20 22l9 9-9 9-9-9z" fill="#fbe07c" /><path d="M9 11l9 9-9 9-9-9z" fill="#80b4f4" /><path d="M15 6l5 8v15M20 14l8 7" fill="none" stroke="#40404a" strokeWidth="2.500" /><circle cx="20" cy="14" r="2.500" fill="#40404a" /><circle cx="28" cy="21" r="2.500" fill="#40404a" /><circle cx="20" cy="30" r="2.500" fill="#40404a" /></Tile> },
  { name: 'PuTTY', icon: <Tile><g stroke="#000" strokeWidth="1"><path d="M18 1h18v13H18zM15 15h23l2 4H14z" fill="#cfcfcf" /><path d="M3 21h18v13H3zM1 35h22v4H1z" fill="#cfcfcf" /></g><path d="M21 3h12v9H21zM6 23h12v9H6z" fill="#0a18d8" /><path d="M27 9L12 19l6 2-5 8 14-11-6-1z" fill="#f8f000" stroke="#000" strokeWidth=".8" /></Tile> },
  { name: 'Notepad++', open: true, icon: <Tile><path d="M7 4h22l-3 33-24-2z" fill="#d6edf6" /><path d="M16 6h14l7 29-19 3z" fill="#4b9fd1" /><path d="M7 10h16M6 15h17M6 20h17M5 25h18M4 30h18M4 34h17" stroke="#6cc67a" strokeWidth="1.500" /><path d="M18 14h14M18 20h15M18 26h17M18 32h18" stroke="#2b78ad" strokeWidth="1.200" /><path d="M6 4h22" stroke="#c8a52a" strokeWidth="4" strokeDasharray="2 2" /></Tile> },
  { name: 'Chrome', open: true, current: true, icon: <Tile><circle cx="20" cy="20" r="18" fill="#fff" /><path d="M4.400 11A18 18 0 0 1 35.600 11H20a9 9 0 0 0-8.300 5z" fill="#dc4437" /><path d="M35.600 11A18 18 0 0 1 20 38l8-13.500A9 9 0 0 0 20 11z" fill="#fdcd3b" /><path d="M20 38A18 18 0 0 1 4.400 11l7.800 13.500A9 9 0 0 0 28 24.500z" fill="#1b9d58" /><circle cx="20" cy="20" r="8.500" fill="#fff" /><circle cx="20" cy="20" r="6.500" fill="#4a87ee" /></Tile> },
  { name: 'Outlook', open: true, icon: <Tile><path d="M1 2h28l7 4v30H1z" fill="#f9e3a2" stroke="#f0b631" strokeWidth="1.500" /><ellipse cx="13" cy="14" rx="8" ry="9.500" fill="none" stroke="#ec8b13" strokeWidth="5.500" /><circle cx="30" cy="15" r="6.500" fill="#fff" stroke="#e4a12a" strokeWidth="2" /><path d="M30 11v4h3" fill="none" stroke="#555" strokeWidth="1.300" /><path d="M21 24h18v14H21z" fill="#fbe9a9" stroke="#b9821a" /><path d="M21 25l9 7 9-7M21 38l7-7M39 38l-7-7" fill="none" stroke="#b9821a" /></Tile> },
  { name: 'Notepad', open: true, icon: <Tile><path d="M14 3h20l-7 31H1z" fill="#a5dbe4" /><path d="M34 3l3 3-4 33-6-5z" fill="#d9ddd0" /><path d="M1 34h26l6 5H8z" fill="#a08c5a" /><path d="M22 12L9 34h10l10-22z" fill="#5bb0bd" opacity=".5" /><path d="M14 3h20" stroke="#9aa6a9" strokeWidth="4" strokeDasharray="2 1" /></Tile> },
  { name: 'Sublime Text', open: true, icon: <Tile><path d="M2 33h36v4H2z" fill="#e2e2e2" /><path d="M5 3h30l3 30H2z" fill="#484848" /><path d="M5 3h30l1 11c-10 4-22 4-32 2z" fill="#6a6a6a" /><path d="M25 9c-5-2-10-1-10 3 0 5 10 3 10 8 0 4-6 4-11 2" fill="none" stroke="#ff9321" strokeWidth="3.800" /></Tile> },
  { name: 'VS Code 2', open: true, icon: <VsCode /> },
  { name: 'Word', open: true, icon: <Tile><path d="M2 3L34 1l3 3v33H2z" fill="#e9f0fa" stroke="#9cb8de" /><path d="M24 20l14 4-3 14-20-3z" fill="#fff" stroke="#b9c9df" /><path d="M5 8l5 20 6-16 4 16 8-21" fill="none" stroke="#1e56ad" strokeWidth="4.500" /></Tile> },
  { name: 'Paint', open: true, icon: <Tile><path d="M3 24C1 11 15 3 27 6c11 3 11 15 6 23-5 7-15 9-20 7-4-2-1-5-3-7s-6-1-7-5z" fill="#d4e9f6" stroke="#93b7cf" /><circle cx="10" cy="23" r="3.200" fill="#df3b2f" /><circle cx="14" cy="14" r="3.500" fill="#5cb648" /><circle cx="23" cy="11" r="3.500" fill="#f5a623" /><circle cx="18" cy="23" r="2.500" fill="#4a7fb0" /><path d="M23 38L34 13" stroke="#e07b22" strokeWidth="3.500" strokeLinecap="round" /><path d="M31 2l8 2-4 9-5-2z" fill="#b98550" /></Tile> },
];

function Taskbar() {
  return (
    <footer className="flex h-12 shrink-0 items-center border-t border-[#566b99] bg-[linear-gradient(90deg,#3e5f9f_0%,#4b6ba8_14%,#4566a6_25%,#32529a_36%,#315298_60%,#2d4a86_100%)] text-[15px] text-white">
      <button aria-label="Iniciar" className="flex w-[60px] justify-center">
        <svg viewBox="0 0 34 34" className="size-[34px]" fill="#fff"><path d="M1 5l14-2v13.500H1zM16.200 2.800L33 .5v16H16.200zM1 17.500h14V31L1 29zM16.200 17.500H33v16l-16.800-2.300z" /></svg>
      </button>
      {tasks.map((t) => (
        <button
          key={t.name}
          aria-label={t.name}
          className={
            t.current
              ? 'mx-[2px] flex h-[47px] w-[58px] items-center justify-center border border-white/80 bg-white/45'
              : t.open
                ? 'mx-[2px] flex h-[47px] w-[58px] items-center justify-center border border-white/35 bg-white/20'
                : 'mx-[2px] flex h-[47px] w-[58px] items-center justify-center'
          }
        >
          {t.icon}
        </button>
      ))}
      <div className="ml-[15px] flex items-center">
        <svg viewBox="0 0 39 24" className="h-6 w-[39px]"><rect x="1" y="1" width="37" height="22" rx="1" fill="#fff" /><path d="M4 5h31v14H4zM4 9.500h31M4 14h31M9 5v9M14 5v9M19.500 5v9M25 5v9M30 5v9M9 14v5M30 14v5" fill="none" stroke="#1d2c4d" strokeWidth="1.400" /></svg>
        <svg viewBox="0 0 10 6" className="ml-[17px] h-[6px] w-[10px]"><path d="M0 6l5-6 5 6z" fill="#fff" /></svg>
        <svg viewBox="0 0 18 20" className="ml-[19px] h-5 w-[18px]" fill="none" stroke="#fff"><rect x="8" y="3" width="8" height="15" strokeWidth="1.400" /><path d="M10.500 1.500h3" strokeWidth="2" /><rect x="10" y="5" width="4" height="11" fill="#fff" stroke="none" /><path d="M1.500 0v4M5.500 0v4M3.500 9v10" strokeWidth="1.500" /><path d="M.5 4h6v3.500l-3 2-3-2z" fill="#fff" /></svg>
        <svg viewBox="0 0 20 20" className="ml-[11px] size-5"><path d="M2 1v18" stroke="#fff" strokeWidth="1.600" /><path d="M3 2h8v2h7l-2 4 2 4H9v-2H3z" fill="#fff" /><circle cx="14" cy="14.500" r="5" fill="#1a2440" stroke="#fff" strokeWidth="1.200" /><path d="M14 11.500v3h2.500" stroke="#fff" fill="none" /></svg>
        <svg viewBox="0 0 17 20" className="ml-3 h-5 w-[17px]"><path d="M1 6h3l6-5v18l-6-5H1z" fill="#fff" /><path d="M13 7c2 2 2 4 0 6" stroke="#fff" fill="none" strokeWidth="1.300" /></svg>
        <svg viewBox="0 0 20 20" className="ml-3 size-5" fill="none" stroke="#fff" strokeWidth="1.700"><path d="M7 4h12v10H5V9M12 14v4M7 18h9" /><rect x="1" y="1" width="4" height="4" /><path d="M3 5v4" /></svg>
      </div>
      <div className="mr-[21px] ml-auto flex gap-5 text-center text-[14px] leading-[22px]">
        <span>POR<br />PTB2</span>
        <span>08:16<br />15/02/2022</span>
      </div>
    </footer>
  );
}

export default function App() {
  return (
    <div className="flex h-screen flex-col overflow-hidden bg-white font-['Open_Sans','Noto_Sans',sans-serif]">
      <TabStrip />
      <Toolbar />
      <BookmarksBar />
      <div className="flex min-h-0 flex-1">
        <Sidebar />
        <LessonPage />
        <Scrollbar />
      </div>
      <Downloads />
      <Taskbar />
    </div>
  );
}
